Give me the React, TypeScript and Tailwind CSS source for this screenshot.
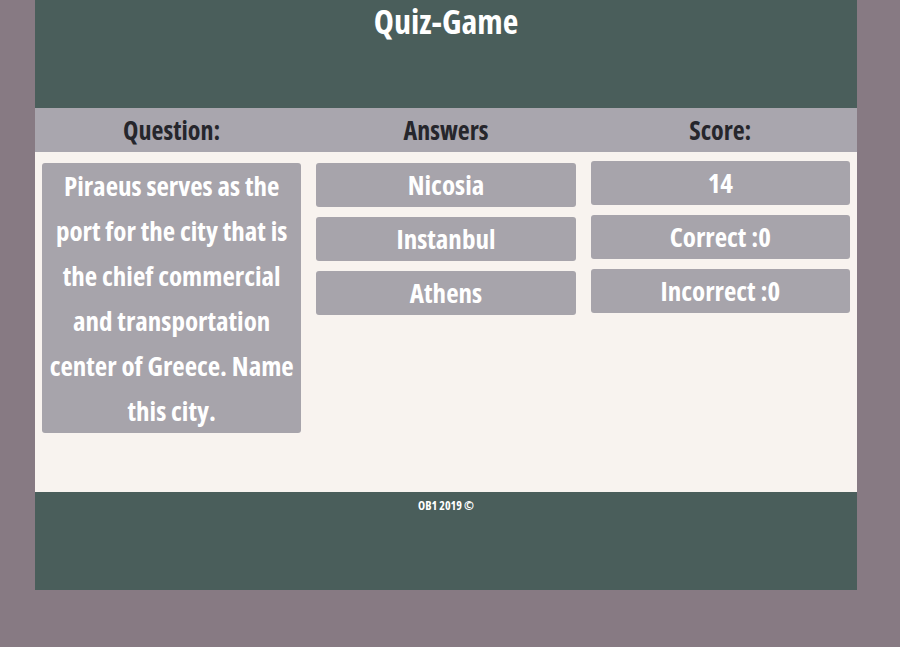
const answers = ['Nicosia', 'Instanbul', 'Athens']
const scores = ['14', 'Correct :0', 'Incorrect :0']

function Tile({ children }: { children: React.ReactNode }) {
  return (
    <div className="h-[44px] rounded-[3px] bg-[#a7a4ab] text-center text-[27px] leading-[44px] text-white">
      {children}
    </div>
  )
}

export default function App() {
  return (
    <div className="min-h-[647px] w-full bg-[#877a83] font-['Open_Sans',sans-serif] font-bold font-stretch-[75%]">
      <div className="mx-[35px] w-[822px]">
        <header className="h-[108px] bg-[#4a5e5b] pt-[1px] text-center">
          <h1 className="text-[34px] leading-[40px] text-white">Quiz-Game</h1>
        </header>
        <div className="grid h-[44px] grid-cols-3 items-center gap-[15px] bg-[#a9a6ae] px-[7px] text-center text-[26px] text-[#26262c]">
          <div>Question:</div>
          <div>Answers</div>
          <div>Score:</div>
        </div>
        <main className="grid h-[340px] grid-cols-3 items-start gap-[15px] bg-[#f8f3ef] px-[7px] pt-[10px]">
          <div className="mt-[1px] rounded-[3px] bg-[#a7a4ab] text-center text-[27px] leading-[45px] text-white">
            Piraeus serves as the port for the city that is the chief commercial and transportation center of Greece. Name this city.
          </div>
          <div className="mt-[1px] flex flex-col gap-[10px]">
            {answers.map((a) => (
              <Tile key={a}>{a}</Tile>
            ))}
          </div>
          <div className="-mt-[1px] flex flex-col gap-[10px]">
            {scores.map((s) => (
              <Tile key={s}>{s}</Tile>
            ))}
          </div>
        </main>
        <footer className="h-[98px] bg-[#4a5e5b] pt-[5px] text-center text-[12px] text-white">
          OB1 2019 ©
        </footer>
      </div>
    </div>
  )
}
